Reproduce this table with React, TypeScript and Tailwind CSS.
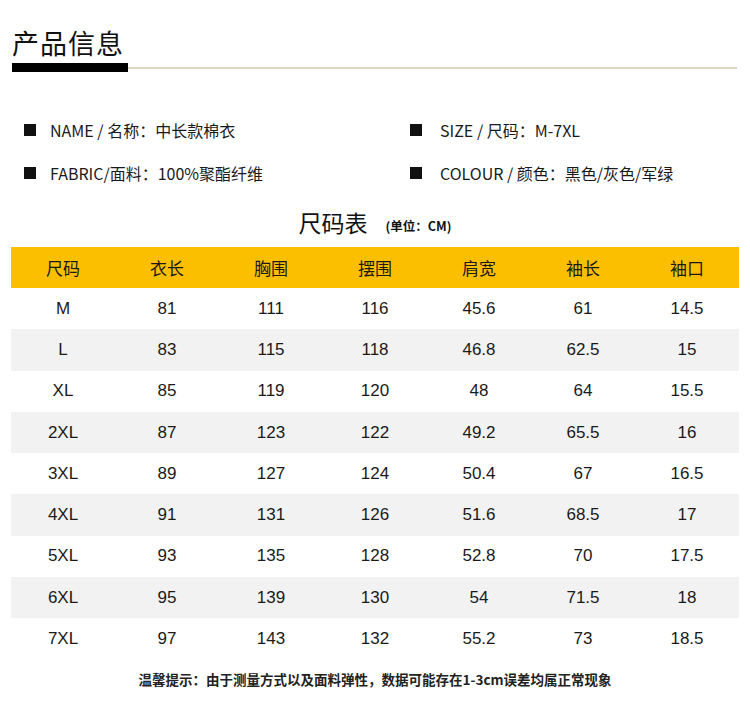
import React from "react";

const cjk = { fontFamily: '"Noto Sans CJK SC", "Noto Sans", sans-serif' };
const num = { fontFamily: '"Liberation Sans", Arial, "Noto Sans CJK SC", sans-serif' };

const headers = ["尺码", "衣长", "胸围", "摆围", "肩宽", "袖长", "袖口"];
const rows = [
  ["M", "81", "111", "116", "45.6", "61", "14.5"],
  ["L", "83", "115", "118", "46.8", "62.5", "15"],
  ["XL", "85", "119", "120", "48", "64", "15.5"],
  ["2XL", "87", "123", "122", "49.2", "65.5", "16"],
  ["3XL", "89", "127", "124", "50.4", "67", "16.5"],
  ["4XL", "91", "131", "126", "51.6", "68.5", "17"],
  ["5XL", "93", "135", "128", "52.8", "70", "17.5"],
  ["6XL", "95", "139", "130", "54", "71.5", "18"],
  ["7XL", "97", "143", "132", "55.2", "73", "18.5"],
];

function Info({ label, gap }: { label: string; gap: string }) {
  return (
    <div className="flex items-center">
      <span className={`w-[12px] h-[12px] bg-[#111] ${gap}`} />
      <span className="text-[16px] text-[#1a1a1a]" style={cjk}>{label}</span>
    </div>
  );
}

export default function App() {
  return (
    <div className="w-[750px] h-[711px] bg-white relative overflow-hidden" style={cjk}>
      <div className="pt-[25px] pl-[12px]">
        <div className="text-[27px] leading-[35px] text-[#111] tracking-[1px]">产品信息</div>
        <div className="flex items-center mt-[3px]">
          <div className="w-[116px] h-[9px] bg-black" />
          <div className="w-[609px] h-[2px] bg-[#dcd7c2]" />
        </div>
      </div>

      <div className="grid grid-cols-[386px_1fr] pl-[24px] mt-[46px] gap-y-[19px]">
        <Info label="NAME / 名称：中长款棉衣" gap="mr-[14px]" />
        <Info label="SIZE / 尺码：M-7XL" gap="mr-[18px]" />
        <Info label="FABRIC/面料：100%聚酯纤维" gap="mr-[14px]" />
        <Info label="COLOUR / 颜色：黑色/灰色/军绿" gap="mr-[18px]" />
      </div>

      <div className="flex items-end justify-center mt-[20px] h-[32px]">
        <span className="text-[23px] leading-[30px] text-[#111]">尺码表</span>
        <span className="text-[12.5px] leading-[22px] ml-[18px] text-[#111] font-bold">(单位：CM)</span>
      </div>

      <div className="mx-[11px] mt-[10px] w-[728px]">
        <div className="grid grid-cols-7 h-[41px] bg-[#fcbf00] items-center">
          {headers.map((h) => (
            <div key={h} className="text-center text-[17px] text-[#1a1a1a]">{h}</div>
          ))}
        </div>
        {rows.map((r, i) => (
          <div
            key={r[0]}
            className={`grid grid-cols-7 h-[41.25px] items-center ${i % 2 === 1 ? "bg-[#f2f2f2]" : "bg-white"}`}
          >
            {r.map((c, j) => (
              <div key={j} className="text-center text-[17px] text-[#1a1a1a]" style={num}>{c}</div>
            ))}
          </div>
        ))}
      </div>

      <div className="text-center mt-[10px] text-[13.5px] font-bold text-[#222]">
        温馨提示：由于测量方式以及面料弹性，数据可能存在1-3cm误差均属正常现象
      </div>
    </div>
  );
}
